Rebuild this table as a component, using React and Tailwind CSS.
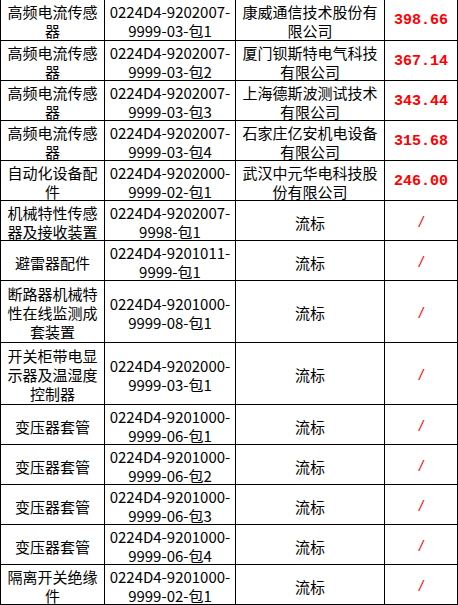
import React from "react";

const rows = [
  { h: "h-[41px]", name: ["高频电流传感", "器"], code: ["0224D4-9202007-", "9999-03-包1"], firm: ["康威通信技术股份有", "限公司"], price: "398.66" },
  { h: "h-[40px]", name: ["高频电流传感", "器"], code: ["0224D4-9202007-", "9999-03-包2"], firm: ["厦门钡斯特电气科技", "有限公司"], price: "367.14" },
  { h: "h-[40px]", name: ["高频电流传感", "器"], code: ["0224D4-9202007-", "9999-03-包3"], firm: ["上海德斯波测试技术", "有限公司"], price: "343.44" },
  { h: "h-[40px]", name: ["高频电流传感", "器"], code: ["0224D4-9202007-", "9999-03-包4"], firm: ["石家庄亿安机电设备", "有限公司"], price: "315.68" },
  { h: "h-[40px]", name: ["自动化设备配", "件"], code: ["0224D4-9202000-", "9999-02-包1"], firm: ["武汉中元华电科技股", "份有限公司"], price: "246.00" },
  { h: "h-[40px]", name: ["机械特性传感", "器及接收装置"], code: ["0224D4-9202007-", "9998-包1"] },
  { h: "h-[40px]", name: ["避雷器配件"], code: ["0224D4-9201011-", "9999-包1"] },
  { h: "h-[62px]", name: ["断路器机械特", "性在线监测成", "套装置"], code: ["0224D4-9201000-", "9999-08-包1"] },
  { h: "h-[62px]", name: ["开关柜带电显", "示器及温湿度", "控制器"], code: ["0224D4-9202000-", "9999-03-包1"] },
  { h: "h-[40px]", name: ["变压器套管"], code: ["0224D4-9201000-", "9999-06-包1"] },
  { h: "h-[40px]", name: ["变压器套管"], code: ["0224D4-9201000-", "9999-06-包2"] },
  { h: "h-[40px]", name: ["变压器套管"], code: ["0224D4-9201000-", "9999-06-包3"] },
  { h: "h-[40px]", name: ["变压器套管"], code: ["0224D4-9201000-", "9999-06-包4"] },
  { h: "h-[40px]", name: ["隔离开关绝缘", "件"], code: ["0224D4-9201000-", "9999-02-包1"] },
];

// one cell's text, broken into the same lines as the sheet
const Lines = ({ lines }) => (
  <div className="flex flex-col items-center pt-[2px] leading-[19px]">
    {lines.map((l, i) => (
      <span key={i} className="block whitespace-nowrap">{l}</span>
    ))}
  </div>
);

export default function App() {
  return (
    <div className="w-[458px] h-[605px] overflow-hidden bg-white text-black text-[15px] font-['Noto_Sans_CJK_SC',sans-serif]">
      {rows.map((r, i) => (
        <div key={i} className={`grid grid-cols-[104px_131px_149px_74px] border-b border-black ${r.h}`}>
          <div className="flex items-center justify-center border-l border-black">
            <Lines lines={r.name} />
          </div>
          <div className="flex items-center justify-center border-l border-black">
            <Lines lines={r.code} />
          </div>
          <div className="flex items-center justify-center border-l border-black">
            <Lines lines={r.firm || ["流标"]} />
          </div>
          <div className="flex items-center justify-center border-l border-r border-black pt-[3px]">
            {r.price ? (
              <span className="font-['Liberation_Mono',monospace] font-bold text-[15px] text-[#ff0000]">{r.price}</span>
            ) : (
              <span className="font-['Liberation_Sans',sans-serif] italic text-[15px] text-[#ff0000]">/</span>
            )}
          </div>
        </div>
      ))}
    </div>
  );
}
